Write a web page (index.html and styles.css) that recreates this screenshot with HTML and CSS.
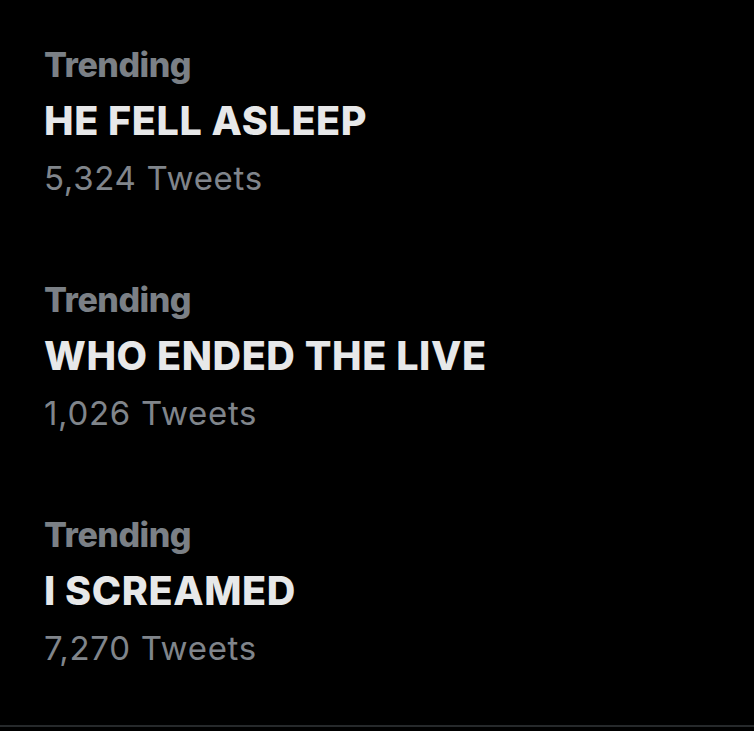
FILE: index.html
```html
<!DOCTYPE html>
<html lang="en">
<head>
<meta charset="utf-8">
<title>Trending</title>
<link rel="stylesheet" href="styles.css">
</head>
<body>
<main class="trends">
  <div class="trend">
    <div class="trend-label">Trending</div>
    <div class="trend-title">HE FELL ASLEEP</div>
    <div class="trend-count">5,324 Tweets</div>
  </div>
  <div class="trend">
    <div class="trend-label">Trending</div>
    <div class="trend-title">WHO ENDED THE LIVE</div>
    <div class="trend-count">1,026 Tweets</div>
  </div>
  <div class="trend">
    <div class="trend-label">Trending</div>
    <div class="trend-title">I SCREAMED</div>
    <div class="trend-count">7,270 Tweets</div>
  </div>
</main>
<div class="divider"></div>
</body>
</html>
```
FILE: styles.css
```css
html, body {
  margin: 0;
  padding: 0;
  background: #000;
}
body {
  width: 754px;
  height: 731px;
  overflow: hidden;
  font-family: Inter, "Liberation Sans", Arial, sans-serif;
}
.trends {
  padding: 4px 0 16px 0;
}
.trend {
  padding: 32px 0 32px 44px;
}
.trend-label,
.trend-title,
.trend-count {
  line-height: 57px;
  white-space: nowrap;
}
.trend-label {
  font-size: 34px;
  font-weight: 800;
  color: #7b8086;
  letter-spacing: -0.5px;
}
.trend-title {
  font-size: 39.5px;
  font-weight: 800;
  color: #e7e8e9;
  letter-spacing: 0.6px;
}
.trend-count {
  font-size: 33px;
  font-weight: 400;
  color: #80858b;
  letter-spacing: 0.7px;
}
.divider {
  height: 2px;
  background: #26292b;
}
```
